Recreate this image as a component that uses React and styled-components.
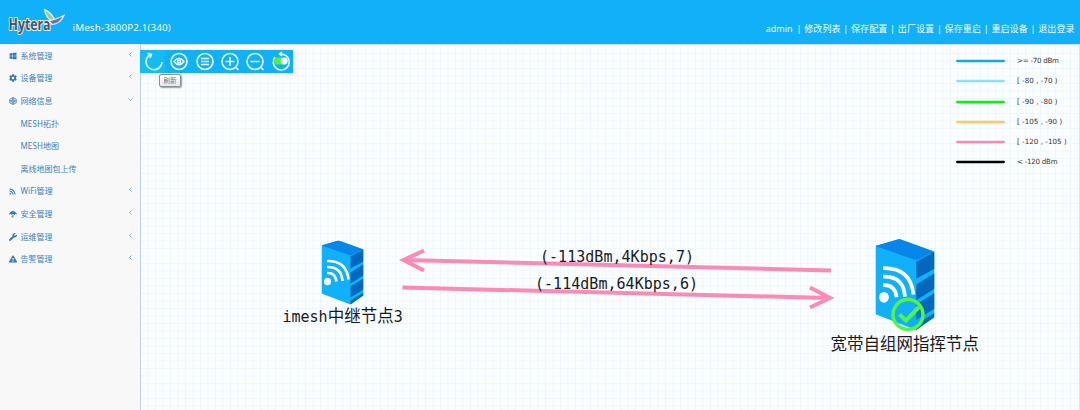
import React from 'react';
import styled, { createGlobalStyle } from 'styled-components';
import { FaWindows, FaCog, FaRss, FaUmbrella, FaWrench, FaExclamationTriangle } from 'react-icons/fa';

const Global = createGlobalStyle`
  * { box-sizing: border-box; }
  body { margin: 0; overflow: hidden; font-family: "Noto Sans", "Noto Sans CJK SC", sans-serif; }
`;
const Page = styled.div`
  width: 1080px; height: 410px; display: flex; flex-direction: column; background: #f8f8f8;
`;
const Header = styled.header`
  height: 44px; flex: none; display: flex; background: #10b1f9; color: #f2fbff; white-space: nowrap;
`;
const Logo = styled.svg`
  width: 72px; height: 44px; flex: none;
`;
const Product = styled.div`
  padding: 20px 0 0 0.5px; line-height: 16px; font-size: 9.8px; letter-spacing: 0.14px; flex: 1;
`;
const Menu = styled.nav`
  display: flex; padding: 21px 5.5px 0 0; font-size: 9px; line-height: 16px;
`;
const MenuItem = styled.a`
  width: ${(p) => p.$w}px; text-align: justify; text-align-last: justify;
`;
const Divider = styled.span`
  width: 10.5px; text-align: center;
`;
const Body = styled.div`
  flex: 1; display: flex; min-height: 0;
`;
const Sidebar = styled.aside`
  width: 140px; flex: none; background: #f8f8f8;
`;
const Item = styled.div`
  height: 22.6px; display: flex; align-items: center; color: #3f80ba; font-size: 8px; white-space: nowrap;
  padding: 0 7px 0 ${(p) => (p.$sub ? 20.5 : 9)}px;
`;
const ItemIcon = styled.span`
  width: 11.5px; display: flex; font-size: 8px; padding-top: 1px; color: #337ab7;
`;
const ItemText = styled.span`
  flex: 1; letter-spacing: ${(p) => (p.$latin ? '0.1px' : '0')};
`;
const Chevron = styled.svg`
  width: 5px; height: 5px; fill: none; stroke: #5f97c7; stroke-width: 0.8; margin-top: -2px;
  transform: ${(p) => (p.$open ? 'rotate(-90deg)' : 'none')};
`;
const Canvas = styled.main`
  flex: 1; position: relative; border-left: 1px solid #b9d5ee; border-top: 1px solid #d3dff0; border-right: 1px solid #dce8f5;
  background-color: #fafeff;
  background-image: linear-gradient(90deg, #eff6fe 1px, transparent 1px), linear-gradient(#eff6fe 1px, transparent 1px);
  background-size: 7.5px 7.5px;
  background-position: 6.5px 0.5px;
`;
const Toolbar = styled.div`
  position: absolute; left: -1px; top: 5px; width: 153px; height: 23px; display: flex; background: #10b1f9;
`;
const Tool = styled.div`
  width: 25.3px; height: 23px; flex: none; display: flex; align-items: center; justify-content: center;
  background: ${(p) => (p.$active ? '#13bcf7' : 'transparent')};
  svg { width: 23px; height: 23px; fill: none; stroke: #e9f9ff; stroke-width: 1.6; overflow: visible; transform: translateX(1.5px); }
`;
const Tooltip = styled.div`
  position: absolute; left: 18px; top: 29px; width: 22px; height: 13px; border: 1px solid #8e8e8e;
  border-radius: 2px; background: linear-gradient(#fff, #e6e7f0); box-shadow: 1px 1px 1.5px #999;
  font-size: 6.6px; line-height: 11px; text-align: center; color: #777; white-space: nowrap;
`;
const Legend = styled.div`
  position: absolute; left: 815px; top: 5.5px; width: 120px; display: flex; flex-direction: column;
`;
const LegendRow = styled.div`
  height: 20.25px; display: flex; align-items: center; gap: 12px;
  font: 7.1px "DejaVu Sans", sans-serif; color: #333; white-space: pre;
  letter-spacing: ${(p) => (p.$tight ? '-0.25px' : '0.05px')};
`;
const Swatch = styled.svg`
  width: 49px; height: 4px; margin-top: 1px; stroke: ${(p) => p.$c}; stroke-width: 2.3; stroke-linecap: round;
`;
const Topology = styled.svg`
  position: absolute; left: -1px; top: -1px; width: 940px; height: 366px;
  text { font-family: "DejaVu Sans Mono", "Noto Sans CJK SC", monospace; fill: #1a1a1a; }
`;

const HeaderLinks = [['admin', 28], ['修改列表', 36.3], ['保存配置', 36.3], ['出厂设置', 36.3], ['保存重启', 36.3], ['重启设备', 36.3], ['退出登录', 36.3]];

const MeshIcon = () => (
  <svg width="8" height="8" viewBox="0 0 16 16" fill="none" stroke="currentColor" strokeWidth="1.5">
    <path d="M8 1 14.5 4.5V11.5L8 15 1.5 11.5V4.5ZM1 8H15M8 1V15M8 3 12.5 8 8 13 3.5 8Z" />
  </svg>
);
const items = [
  { icon: <FaWindows />, text: '系统管理' },
  { icon: <FaCog />, text: '设备管理' },
  { icon: <MeshIcon />, text: '网络信息', open: true },
  { sub: true, latin: true, text: 'MESH拓扑' },
  { sub: true, latin: true, text: 'MESH地图' },
  { sub: true, text: '离线地图包上传' },
  { icon: <FaRss size={7} />, latin: true, text: 'WiFi管理' },
  { icon: <FaUmbrella />, text: '安全管理' },
  { icon: <FaWrench />, text: '运维管理' },
  { icon: <FaExclamationTriangle />, text: '告警管理' },
];
const legend = [
  ['#12aada', '>= -70 dBm'], ['#93dcff', '[ -80 , -70 )'], ['#00f800', '[ -90 , -80 )'],
  ['#ffc865', '[ -105 , -90 )'], ['#ff87b5', '[ -120 , -105 )'], ['#000', '< -120 dBm'],
];

const Server = ({ x, y, w, h }) => (
  <svg x={x} y={y} width={w} height={h} viewBox="0 0 42 64" preserveAspectRatio="none">
    <path d="M0 5 17 0 42 9V54L29 64 0 53Z" fill="#10b1f9" />
    <path d="M0 5 17 0 42 9 29 15Z" fill="#0586e8" />
    <path d="M29 16 42 9V21L29 28ZM29 32 42 24V35L29 43ZM29 46 42 38V49L29 57ZM29 60 42 52V55L29 64Z" fill="#0069bd" />
    <path d="M5.500 32.500Q14 32 15 41M5.500 26.500Q20 26 21 40.500M5.500 20.500Q25 20 27 39" fill="none" stroke="#fff" strokeWidth="2.6" />
    <ellipse cx="6" cy="41" rx="3.5" ry="3.8" fill="#fff" />
  </svg>
);

export default function App() {
  return (
    <Page>
      <Global />
      <Header>
        <Logo viewBox="0 0 72 44">
          <text x="8.5" y="29.5" textLength="42" lengthAdjust="spacingAndGlyphs" fontFamily="Open Sans, Noto Sans, sans-serif" fontSize="15.5" fontWeight="700" fill="#4c555c" stroke="#e4f3fb" strokeWidth="2" paintOrder="stroke">Hytera</text>
          <path d="M44.500 9.500Q53 13 55 22Q46 20 44.500 9.500Z" fill="#a9c98a" stroke="#eef8fb" strokeWidth="1.200" />
          <path d="M49 21Q57 19 64 15.500Q60 24 52 24.500Z" fill="#6f70b4" stroke="#eef8fb" strokeWidth="1.200" />
        </Logo>
        <Product>iMesh-3800P2.1(340)</Product>
        <Menu>
          {HeaderLinks.map(([t, w], i) => (
            <React.Fragment key={t}>
              {i > 0 && <Divider>|</Divider>}
              <MenuItem $w={w}>{t}</MenuItem>
            </React.Fragment>
          ))}
        </Menu>
      </Header>
      <Body>
        <Sidebar>
          {items.map((it) => (
            <Item key={it.text} $sub={it.sub}>
              {!it.sub && <ItemIcon>{it.icon}</ItemIcon>}
              <ItemText $latin={it.latin}>{it.text}</ItemText>
              {!it.sub && <Chevron $open={it.open} viewBox="0 0 5 5"><path d="M3.500 .5 1.500 2.500 3.500 4.500" /></Chevron>}
            </Item>
          ))}
        </Sidebar>
        <Canvas>
          <Topology viewBox="140 44 940 366">
            <g stroke="#fb8ab6" strokeWidth="4" fill="none">
              <path d="M831 270.500 404 260M424 250.500 403.500 260 424 270.500" />
              <path d="M402.500 287.500 829 298M810 287.500 830 298 810 307.500" />
            </g>
            <text x="540" y="261.500" fontSize="15" textLength="154">(-113dBm,4Kbps,7)</text>
            <text x="535" y="289" fontSize="15" textLength="163">(-114dBm,64Kbps,6)</text>
            <Server x={321.500} y={240.500} w={42} h={64} />
            <text x="282.500" y="322" fontSize="15">imesh<tspan fontSize="16.500">中继节点</tspan>3</text>
            <Server x={875.500} y={239} w={59} h={91} />
            <circle cx="908" cy="314.500" r="15" fill="#10b1f9" fillOpacity=".25" stroke="#55f343" strokeWidth="3.500" />
            <path d="M899.500 314.500 906 320.500 919 307" fill="none" stroke="#55f343" strokeWidth="4" />
            <text x="830.500" y="349.500" fontSize="16.500">宽带自组网指挥节点</text>
          </Topology>
          <Toolbar>
            <Tool $active><svg viewBox="0 0 23 23"><path d="M8 4.500A8 8 0 1 0 19.500 12M5 3.500 9 4.300 7.500 8" /></svg></Tool>
            <Tool><svg viewBox="0 0 23 23"><circle cx="11.500" cy="11.500" r="8" /><path d="M6.500 11.500Q11.500 5 16.500 11.500Q11.500 18 6.500 11.500Z" /><circle cx="11.500" cy="11.500" r="1.500" /></svg></Tool>
            <Tool><svg viewBox="0 0 23 23"><circle cx="11.500" cy="11.500" r="8" /><path d="M7.500 8.500H15.500M7.500 11.500H15.500M7.500 14.500H15.500" /></svg></Tool>
            <Tool><svg viewBox="0 0 23 23"><circle cx="11.500" cy="11.500" r="8" /><path d="M7 11.500H16M11.500 7V16M17 17 20 20" /></svg></Tool>
            <Tool><svg viewBox="0 0 23 23"><circle cx="11.500" cy="11.500" r="8" /><path d="M7 11.500H16M17 17 20 20" /></svg></Tool>
            <Tool><svg viewBox="0 0 23 23"><path d="M5.500 7A8 8 0 1 0 18 7Q15.500 4 10 4M12.500 2 10 4 12.500 6" /><rect x="4.500" y="7.500" width="13.500" height="7" rx="3.500" fill="#55ef42" stroke="none" /><circle cx="14.700" cy="11" r="3.500" fill="#fff" stroke="none" /></svg></Tool>
          </Toolbar>
          <Tooltip>刷新</Tooltip>
          <Legend>
            {legend.map(([c, t]) => (
              <LegendRow key={t} $tight={t.includes('dBm')}>
                <Swatch $c={c} viewBox="0 0 49 4"><path d="M1.200 2H47.800" /></Swatch>{t}
              </LegendRow>
            ))}
          </Legend>
        </Canvas>
      </Body>
    </Page>
  );
}
